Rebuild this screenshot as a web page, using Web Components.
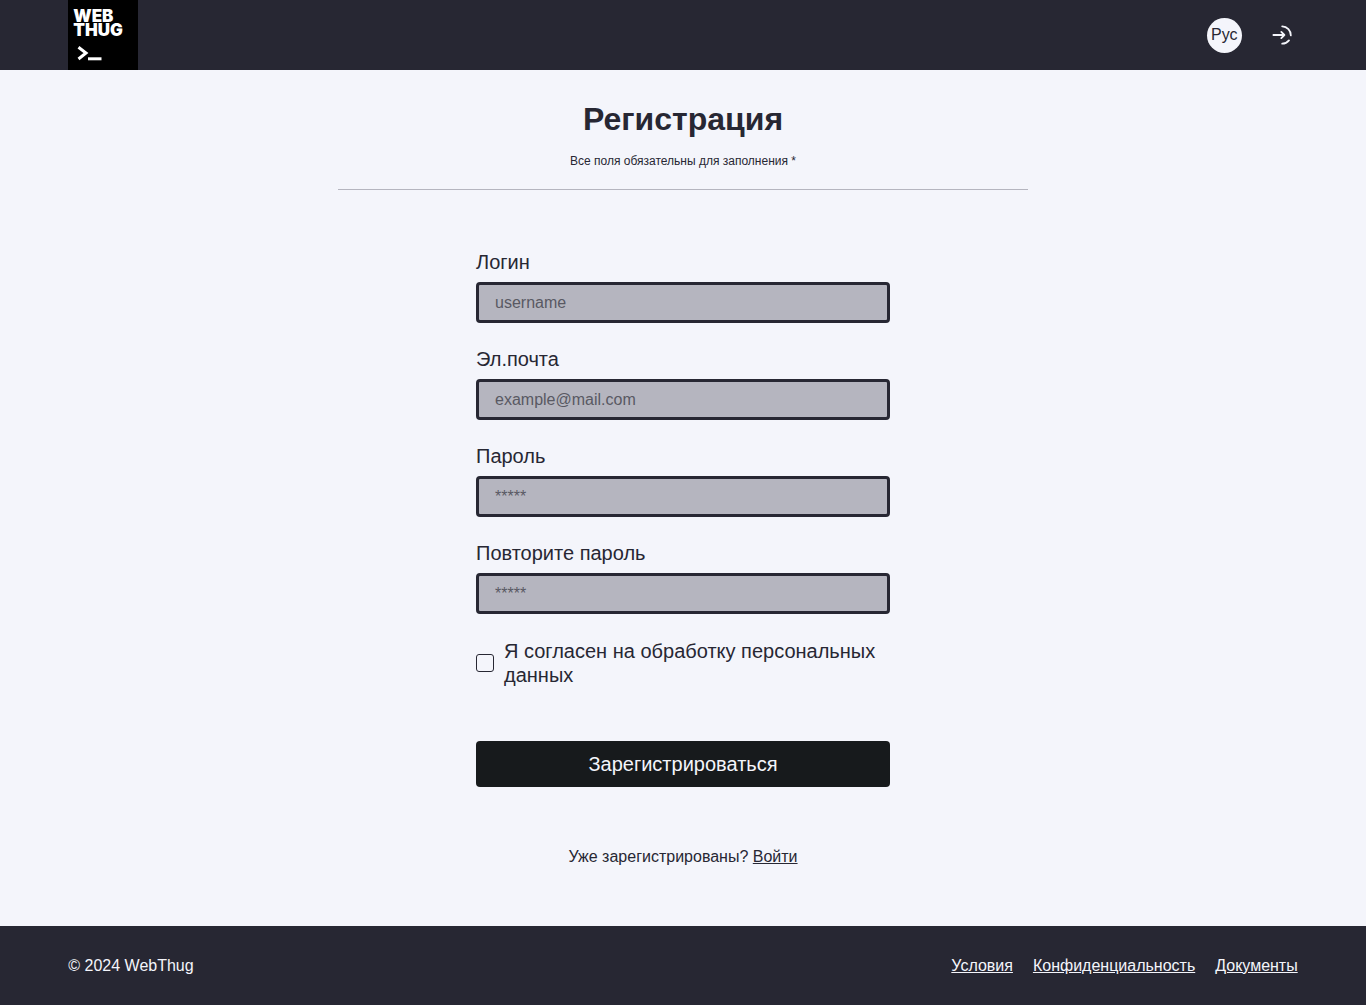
<!DOCTYPE html>
<html lang="ru">
<head>
<meta charset="utf-8">
<meta name="viewport" content="width=device-width, initial-scale=1">
<title>WebThug</title>
<style>
  :root { --ink: #272733; --paper: #f4f5fb; --muted: #b5b5bf; --action: #171a1c; }
  body { margin: 0; background: var(--paper); color: var(--ink); font: 16px/19px "Liberation Sans", Arial, sans-serif; }
</style>
</head>
<body>
<wt-page></wt-page>

<template id="page">
  <style>
    :host { display: flex; flex-direction: column; min-height: 100vh; }
    main { flex: 1; display: flex; flex-direction: column; align-items: center; padding: 30px 5% 60px; }
  </style>
  <wt-header></wt-header>
  <main>
    <wt-title>Регистрация<span slot="note">Все поля обязательны для заполнения *</span></wt-title>
    <wt-form></wt-form>
  </main>
  <wt-footer></wt-footer>
</template>

<template id="header">
  <style>
    :host { display: block; background: var(--ink); padding: 0 5%; }
    header { display: flex; justify-content: space-between; align-items: center; height: 70px; }
    nav { display: flex; align-items: center; gap: 24px; }
    .lang { width: 35px; height: 35px; padding: 0 0 2px; border: 0; border-radius: 50%; background: var(--paper); color: var(--ink); font: inherit; cursor: pointer; }
    .login { display: flex; padding: 6px; color: var(--paper); }
  </style>
  <header>
    <wt-logo></wt-logo>
    <nav>
      <button class="lang" type="button">Рус</button>
      <a class="login" href="#login" aria-label="Войти">
        <svg width="20" height="20" viewBox="0 0 20 20" fill="none" stroke="currentColor" stroke-width="1.8" stroke-linecap="round" stroke-linejoin="round">
          <path d="M1.4 10H12.4M9.3 6.9L12.4 10L9.3 13.1"/>
          <path d="M10.2 1.3A8.8 8.8 0 0 1 18.8 10.4M17 15.4A8.8 8.8 0 0 1 10.2 18.7"/>
        </svg>
      </a>
    </nav>
  </header>
</template>

<template id="logo">
  <style>
    :host { display: block; }
    a { display: block; box-sizing: border-box; width: 70px; height: 70px; padding: 9px 5px; background: #000; color: #fff; text-decoration: none; font: 900 17px/14px Inter, sans-serif; white-space: nowrap; }
    span, svg { display: block; }
    svg { margin: 8px 0 0 4px; }
  </style>
  <a href="#home">
    <span>WEB</span><span>THUG</span>
    <svg width="26" height="17" viewBox="0 0 26 17" fill="none" stroke="#fff">
      <path d="M1.5 2.2L9 8L1.5 14" stroke-width="3"/>
      <path d="M11 13.8H24.5" stroke-width="3"/>
    </svg>
  </a>
</template>

<template id="title">
  <style>
    :host { display: block; box-sizing: border-box; width: 100%; max-width: 690px; padding-bottom: 20px; border-bottom: 1px solid var(--muted); text-align: center; }
    h1 { margin: 0 0 16px; font-size: 32px; line-height: 38px; }
    p { margin: 0; font-size: 12px; line-height: 15px; }
  </style>
  <h1><slot></slot></h1>
  <p><slot name="note"></slot></p>
</template>

<template id="field">
  <style>
    :host { display: flex; flex-direction: column; gap: 8px; }
    label { font-size: 20px; line-height: 24px; }
    input { box-sizing: border-box; width: 100%; height: 41px; margin: 0; padding: 8px 16px; border: 3px solid var(--ink); border-radius: 4px; background: var(--muted); color: var(--ink); font: inherit; }
    input::placeholder { color: #595963; opacity: 1; }
  </style>
  <label for="control"><slot></slot></label>
  <input id="control">
</template>

<template id="form">
  <style>
    :host { display: block; width: 100%; max-width: 414px; margin-top: 60px; }
    form { display: flex; flex-direction: column; gap: 25px; }
    .fields { display: flex; flex-direction: column; gap: 24px; }
    .consent { display: flex; align-items: center; gap: 10px; font-size: 20px; line-height: 24px; }
    input { appearance: none; flex: none; box-sizing: border-box; width: 18px; height: 18px; margin: 0; border: 1px solid var(--ink); border-radius: 3px; }
    input:checked { background: var(--ink); }
    button { height: 46px; margin: 29px 0 0; padding: 0 16px; border: 0; border-radius: 4px; background: var(--action); color: var(--paper); font: inherit; font-size: 20px; line-height: 24px; cursor: pointer; }
    p { margin: 60px 0 0; text-align: center; }
    a { color: inherit; }
  </style>
  <form>
    <div class="fields">
      <wt-field placeholder="username">Логин</wt-field>
      <wt-field type="email" placeholder="example@mail.com">Эл.почта</wt-field>
      <wt-field type="password" placeholder="*****">Пароль</wt-field>
      <wt-field type="password" placeholder="*****">Повторите пароль</wt-field>
    </div>
    <div class="consent"><input id="agree" type="checkbox"><label for="agree">Я согласен на обработку персональных данных</label></div>
    <button type="submit">Зарегистрироваться</button>
  </form>
  <p>Уже зарегистрированы? <a href="#login">Войти</a></p>
</template>

<template id="footer">
  <style>
    :host { display: block; background: var(--ink); color: var(--paper); padding: 30px 5%; }
    footer, nav { display: flex; flex-wrap: wrap; gap: 20px; }
    footer { justify-content: space-between; }
    a { color: inherit; }
  </style>
  <footer>
    <span>© 2024 WebThug</span>
    <nav><a href="#terms">Условия</a><a href="#privacy">Конфиденциальность</a><a href="#docs">Документы</a></nav>
  </footer>
</template>

<script>
  class WtElement extends HTMLElement {
    constructor() {
      super();
      const name = this.localName.replace('wt-', '');
      this.attachShadow({ mode: 'open' }).append(document.getElementById(name).content.cloneNode(true));
    }
  }
  class WtField extends WtElement {
    connectedCallback() {
      const input = this.shadowRoot.querySelector('input');
      input.type = this.getAttribute('type') || 'text';
      input.placeholder = this.getAttribute('placeholder') || '';
    }
  }
  customElements.define('wt-logo', class extends WtElement {});
  customElements.define('wt-header', class extends WtElement {});
  customElements.define('wt-title', class extends WtElement {});
  customElements.define('wt-field', WtField);
  customElements.define('wt-form', class extends WtElement {});
  customElements.define('wt-footer', class extends WtElement {});
  customElements.define('wt-page', class extends WtElement {});
</script>
</body>
</html>
